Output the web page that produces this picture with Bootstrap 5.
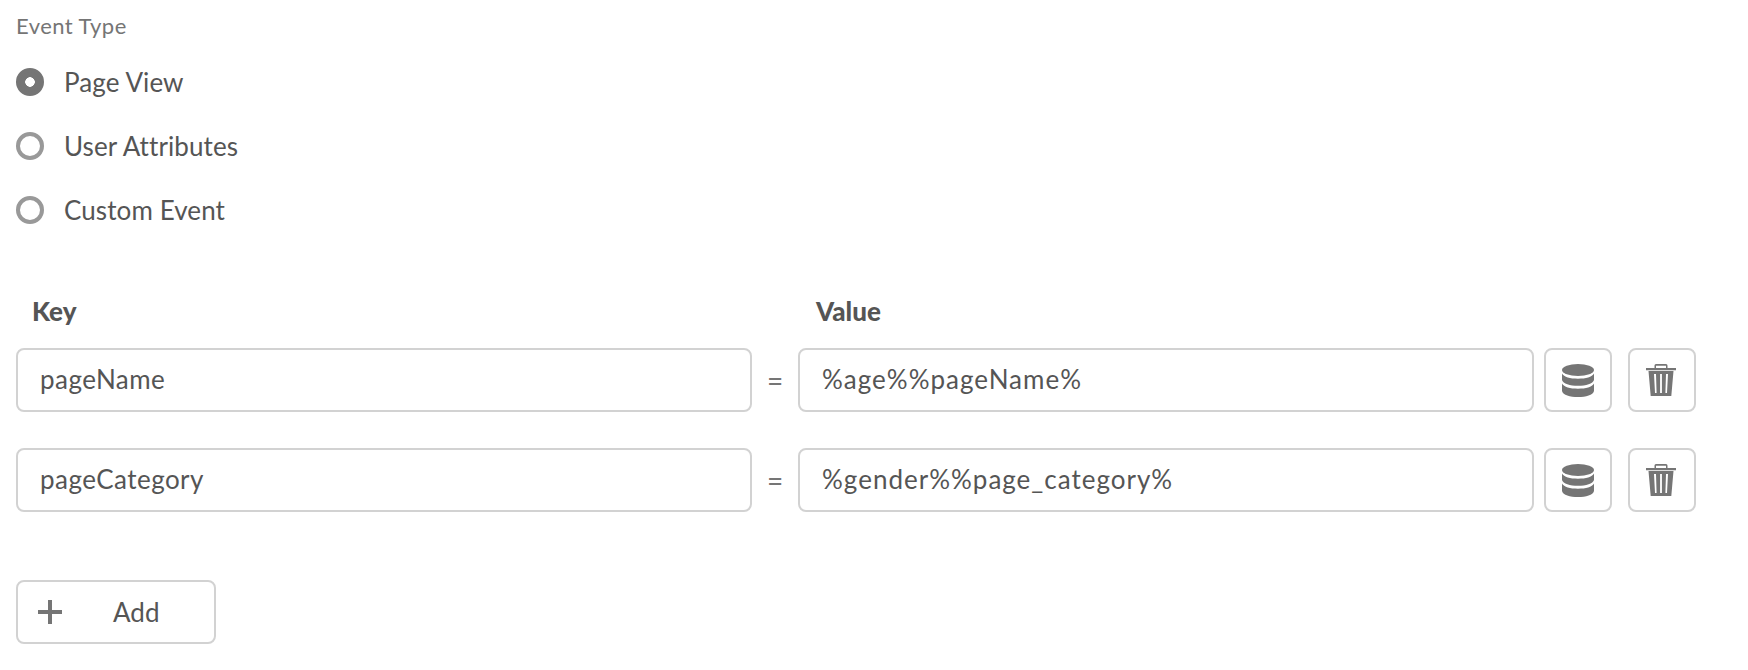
<!DOCTYPE html>
<html lang="en">
  <head>
    <meta charset="UTF-8" />
    <title>Event Type</title>
    <link href="https://cdn.jsdelivr.net/npm/bootstrap@5.3.0/dist/css/bootstrap.min.css" rel="stylesheet" />
    <style>
      body {
        font-family: Lato, "Open Sans", sans-serif;
        color: #555;
        background: #fff;
      }
      .page-wrap {
        width: 1680px;
        margin-left: 16px;
        padding-top: 12px;
      }
      .type-label {
        font-size: 22px;
        line-height: 28px;
        letter-spacing: 0.45px;
        color: #757575;
        margin-bottom: 28px;
      }
      .type-option {
        display: flex;
        align-items: center;
        gap: 20px;
        height: 28px;
        padding: 0;
        margin-bottom: 36px;
      }
      .type-option .form-check-input {
        width: 28px;
        height: 28px;
        margin: 0;
        float: none;
        border: 4px solid #999;
      }
      .type-option .form-check-input:checked {
        background-color: #757575;
        border-color: #757575;
        background-image: radial-gradient(circle, #fff 0 4.5px, #757575 5px);
      }
      .type-option .form-check-label {
        font-size: 26px;
        letter-spacing: 0.1px;
      }
      .kv-head {
        font-weight: 900;
        font-size: 26px;
        line-height: 32px;
        margin-top: 71px;
        margin-bottom: 21px;
      }
      .kv-head-key {
        width: 800px;
        padding-left: 16px;
      }
      .kv-row {
        margin-bottom: 36px;
        height: 64px;
      }
      .kv-input.form-control {
        flex: 0 0 736px;
        height: 64px;
        padding: 0 22px 2px;
        font-size: 26px;
        letter-spacing: 0.45px;
        color: #555;
        border: 2px solid #d2d2d2;
        border-radius: 8px;
      }
      .kv-input.kv-value {
        letter-spacing: 1px;
      }
      .kv-eq {
        width: 46px;
        text-align: center;
        font-size: 28px;
        color: #757575;
      }
      .icon-btn.btn {
        width: 68px;
        height: 64px;
        padding: 0;
        border: 2px solid #d2d2d2;
        border-radius: 8px;
        background: #fff;
      }
      .db-btn {
        margin-left: 10px;
      }
      .add-btn.btn {
        width: 200px;
        height: 64px;
        margin-top: 68px;
        padding: 0 0 0 20px;
        border: 2px solid #d2d2d2;
        border-radius: 8px;
        background: #fff;
        color: #555;
        font-size: 26px;
      }
      .add-text {
        margin-left: 51px;
      }
    </style>
  </head>
  <body>
    <div class="page-wrap">
      <!-- Event type -->
      <div class="type-label">Event Type</div>
      <div class="form-check type-option">
        <input class="form-check-input" type="radio" name="eventType" id="pageView" checked />
        <label class="form-check-label" for="pageView">Page View</label>
      </div>
      <div class="form-check type-option">
        <input class="form-check-input" type="radio" name="eventType" id="userAttr" />
        <label class="form-check-label" for="userAttr">User Attributes</label>
      </div>
      <div class="form-check type-option">
        <input class="form-check-input" type="radio" name="eventType" id="customEvent" />
        <label class="form-check-label" for="customEvent">Custom Event</label>
      </div>

      <!-- Key / value rows -->
      <div class="d-flex kv-head">
        <div class="kv-head-key">Key</div>
        <div>Value</div>
      </div>

      <div class="d-flex align-items-center kv-row">
        <input class="form-control kv-input" type="text" value="pageName" />
        <div class="kv-eq">=</div>
        <input class="form-control kv-input kv-value" type="text" value="%age%%pageName%" />
        <button class="btn icon-btn db-btn" type="button">
          <svg width="32" height="33" viewBox="0 0 32 33"><g fill="#757575"><ellipse cx="16" cy="6" rx="16" ry="6"/><path d="M0 9.500c2 3.500 8 5.200 16 5.200s14-1.700 16-5.200v6.500c-1 3.800-8 5.800-16 5.800S1 19.800 0 16z"/><path d="M0 19.500c2 3.500 8 5.200 16 5.200s14-1.700 16-5.200V27c-1 4-8 6-16 6S1 31 0 27z"/></g></svg>
        </button>
        <button class="btn icon-btn ms-3" type="button">
          <svg width="32" height="32" viewBox="0 0 32 32"><path fill="#757575" fill-rule="evenodd" d="M0 4h8.500V1.500q0-1.500 1.500-1.500h10q1.500 0 1.500 1.500V4H30v2.300H0zM10 4h10V1.700H10zM2.500 7h25l-2.200 25H4.700zM8 10l1 19h1.600L10 10zm6.100 0v19h1.800V10zM20 10l-.6 19H21l1-19z"/></svg>
        </button>
      </div>

      <div class="d-flex align-items-center kv-row">
        <input class="form-control kv-input" type="text" value="pageCategory" />
        <div class="kv-eq">=</div>
        <input class="form-control kv-input kv-value" type="text" value="%gender%%page_category%" />
        <button class="btn icon-btn db-btn" type="button">
          <svg width="32" height="33" viewBox="0 0 32 33"><g fill="#757575"><ellipse cx="16" cy="6" rx="16" ry="6"/><path d="M0 9.500c2 3.500 8 5.200 16 5.200s14-1.700 16-5.200v6.500c-1 3.800-8 5.800-16 5.800S1 19.800 0 16z"/><path d="M0 19.500c2 3.500 8 5.200 16 5.200s14-1.700 16-5.200V27c-1 4-8 6-16 6S1 31 0 27z"/></g></svg>
        </button>
        <button class="btn icon-btn ms-3" type="button">
          <svg width="32" height="32" viewBox="0 0 32 32"><path fill="#757575" fill-rule="evenodd" d="M0 4h8.500V1.500q0-1.500 1.500-1.500h10q1.500 0 1.500 1.500V4H30v2.300H0zM10 4h10V1.700H10zM2.500 7h25l-2.200 25H4.700zM8 10l1 19h1.600L10 10zm6.100 0v19h1.800V10zM20 10l-.6 19H21l1-19z"/></svg>
        </button>
      </div>

      <button class="btn add-btn d-flex align-items-center" type="button">
        <svg width="24" height="24" viewBox="0 0 24 24"><path fill="#757575" d="M10 0h4v10h10v4H14v10h-4V14H0v-4h10z"/></svg>
        <span class="add-text">Add</span>
      </button>
    </div>

    <script src="https://cdn.jsdelivr.net/npm/bootstrap@5.3.0/dist/js/bootstrap.bundle.min.js"></script>
  </body>
</html>
